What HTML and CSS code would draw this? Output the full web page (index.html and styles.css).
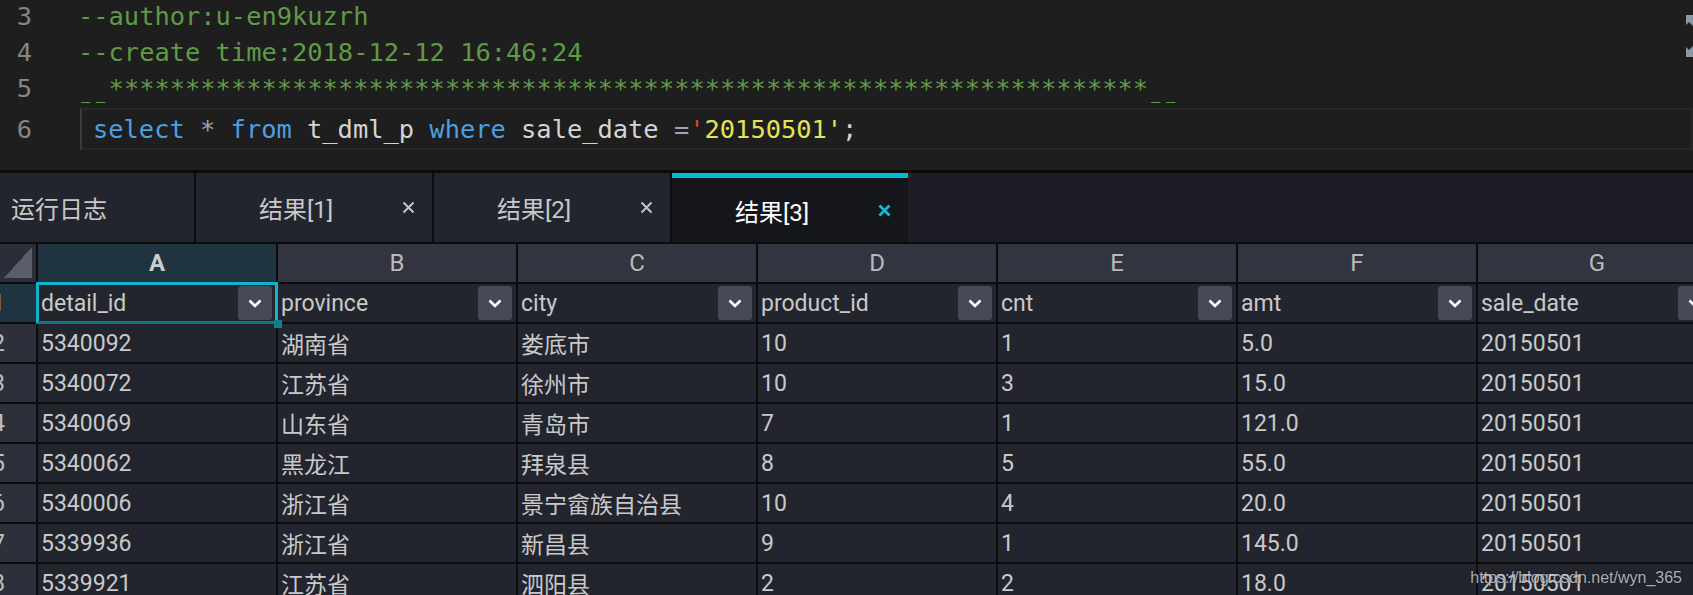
FILE: index.html
```html
<!DOCTYPE html>
<html lang="zh-CN">
<head>
  <meta charset="UTF-8">
  <title>结果[3]</title>
  <link rel="stylesheet" href="styles.css">
</head>
<body>
  <div class="editor">
    <div class="line"><span class="ln">3</span><span class="code cm">--author:u-en9kuzrh</span></div>
    <div class="line"><span class="ln">4</span><span class="code cm">--create time:2018-12-12 16:46:24</span></div>
    <div class="line"><span class="ln">5</span><span class="code cm"><span class="us">_</span><span class="us">_</span>********************************************************************<span class="us">_</span><span class="us">_</span></span></div>
    <div class="line current"><span class="ln">6</span><div class="code"><span class="kw">select</span> <span class="op">*</span> <span class="kw">from</span> t_dml_p <span class="kw">where</span> sale_date <span class="op">=</span><span class="q">'</span><span class="str">20150501'</span>;</div></div>
    <div class="editor-tools">
      <svg width="18" height="46" viewBox="0 0 18 46">
        <path d="M1 2h10l-3.5 3.5 7 7-3.5 3.5-7-7-3 3z" fill="#8b9aa7"/>
        <path d="M1 44h10l-3.5-3.5 7-7-3.5-3.5-7 7-3-3z" fill="#8b9aa7"/>
      </svg>
    </div>
  </div>

  <div class="tabs">
    <div class="tab first"><span class="tab-title">运行日志</span></div>
    <div class="tab"><span class="tab-title">结果[1]</span><svg class="close" width="13" height="13" viewBox="0 0 13 13"><path d="M1.5 1.5l10 10M11.5 1.5l-10 10"/></svg></div>
    <div class="tab"><span class="tab-title">结果[2]</span><svg class="close" width="13" height="13" viewBox="0 0 13 13"><path d="M1.5 1.5l10 10M11.5 1.5l-10 10"/></svg></div>
    <div class="tab active"><span class="tab-title">结果[3]</span><svg class="close" width="13" height="13" viewBox="0 0 13 13"><path d="M1.5 1.5l10 10M11.5 1.5l-10 10"/></svg></div>
  </div>

  <div class="sheet" id="sheet">
    <div class="c corner"><div class="tri"></div></div>
    <div class="c hd sel">A</div>
    <div class="c hd">B</div>
    <div class="c hd">C</div>
    <div class="c hd">D</div>
    <div class="c hd">E</div>
    <div class="c hd">F</div>
    <div class="c hd">G</div>
  </div>

  <div class="watermark">https://blog.csdn.net/wyn_365</div>

  <script>
    var fields = ["detail_id", "province", "city", "product_id", "cnt", "amt", "sale_date"];
    var rows = [
      ["5340092", "湖南省", "娄底市", "10", "1", "5.0", "20150501"],
      ["5340072", "江苏省", "徐州市", "10", "3", "15.0", "20150501"],
      ["5340069", "山东省", "青岛市", "7", "1", "121.0", "20150501"],
      ["5340062", "黑龙江", "拜泉县", "8", "5", "55.0", "20150501"],
      ["5340006", "浙江省", "景宁畲族自治县", "10", "4", "20.0", "20150501"],
      ["5339936", "浙江省", "新昌县", "9", "1", "145.0", "20150501"],
      ["5339921", "江苏省", "泗阳县", "2", "2", "18.0", "20150501"]
    ];
    var chevron = '<svg width="14" height="9" viewBox="0 0 14 9"><path d="M1.5 1.5l5.5 5.5 5.5-5.5" fill="none" stroke="#fff" stroke-width="2.6"/></svg>';
    var sheet = document.getElementById("sheet");

    function cell(cls, html) {
      var div = document.createElement("div");
      div.className = "c " + cls;
      div.innerHTML = html;
      sheet.appendChild(div);
    }

    cell("rh sel", "<span>1</span>");
    for (var i = 0; i < fields.length; i++) {
      cell("fld" + (i === 0 ? " active" : ""), "<span>" + fields[i] + "</span><span class=\"dd\">" + chevron + "</span>");
    }
    for (var r = 0; r < rows.length; r++) {
      cell("rh", "<span>" + (r + 2) + "</span>");
      for (var j = 0; j < rows[r].length; j++) {
        cell("", rows[r][j]);
      }
    }
  </script>
</body>
</html>
```

FILE: styles.css
```css
body {
  margin: 0;
  width: 1693px;
  height: 595px;
  overflow: hidden;
  background-color: #1e1e1e;
  position: relative;
}

/* editor */
.editor {
  height: 170px;
  background-color: #1e1e1e;
  border-bottom: 3px solid #0c0c0c;
  position: relative;
  overflow: hidden;
  font-family: "DejaVu Sans Mono", "Liberation Mono", monospace;
  font-size: 25.4px;
  color: #d4d4d4;
}

.line {
  display: flex;
  align-items: center;
  height: 36px;
}

.line:first-child {
  margin-top: -2px;
}

.ln {
  width: 32px;
  text-align: right;
  color: #858585;
}

.code {
  margin-left: 46px;
  white-space: pre;
}

.cm {
  color: #5f9a46;
}

.us {
  display: inline-block;
  transform: scaleX(0.6);
}

.line.current {
  height: 42px;
  margin-top: 2px;
}

.line.current .code {
  margin-left: 48px;
  flex: 1;
  height: 38px;
  line-height: 38px;
  padding-left: 11px;
  border: 2px solid #282828;
  border-left-color: #3c3c3c;
}

.kw {
  color: #4d9fe0;
}

.op {
  color: #a0a6ad;
}

.q {
  color: #d0463a;
}

.str {
  color: #e3e35a;
}

.editor-tools {
  position: absolute;
  right: -10px;
  top: 13px;
}

/* tabs */
.tabs {
  display: flex;
  height: 69px;
  background-color: #1c1d25;
  font-family: Roboto, "Noto Sans CJK SC", sans-serif;
  font-size: 24px;
}

.tab {
  width: 236px;
  flex-shrink: 0;
  display: flex;
  align-items: center;
  background-color: #23252e;
  border-right: 2px solid #0c0c0c;
  color: #c8c8c8;
}

.tab.first {
  width: 194px;
}

.tab.first .tab-title {
  padding-left: 11px;
}

.tab-title {
  flex: 1;
  padding-left: 63px;
}

.close {
  margin-right: 17px;
  stroke: #c4c4c4;
  stroke-width: 2;
}

.tab.active {
  background-color: #15161b;
  border-top: 5px solid #00bcd4;
  border-right: none;
  color: #ffffff;
}

.tab.active .close {
  stroke: #19b8d0;
  stroke-width: 2.8;
}

/* sheet */
.sheet {
  display: grid;
  grid-template-columns: 36px repeat(7, 238px);
  grid-auto-rows: 38px;
  gap: 2px;
  padding-top: 2px;
  background-color: #0c0c0c;
  font-family: Roboto, "Noto Sans CJK SC", sans-serif;
  font-size: 23px;
  color: #c9c9c9;
}

.c {
  display: flex;
  align-items: center;
  padding-left: 3px;
  background-color: #23252e;
  white-space: nowrap;
  overflow: hidden;
}

.hd {
  justify-content: center;
  padding-left: 0;
  background-color: #32343f;
  color: #b9b9b9;
  font-size: 24px;
}

.hd.sel {
  background-color: #1f3440;
  color: #cdcdcd;
  font-weight: bold;
}

.corner {
  padding: 0;
  background-color: #2b2d38;
}

.tri {
  width: 28px;
  height: 31px;
  margin: 3px 4px 4px 4px;
  background: linear-gradient(to bottom right, transparent 50%, #5b5d68 50%);
}

.rh {
  padding-left: 0;
  background-color: #2d2f3a;
  color: #c0c0c0;
}

.rh span {
  margin-left: -8px;
}

.rh.sel {
  background-color: #1f3440;
}

.fld {
  justify-content: space-between;
  padding-right: 4px;
}

.dd {
  width: 34px;
  height: 34px;
  flex-shrink: 0;
  display: flex;
  align-items: center;
  justify-content: center;
  background-color: #464958;
  border-radius: 3px;
}

.fld.active {
  position: relative;
  overflow: visible;
}

.fld.active::before {
  content: "";
  position: absolute;
  top: -2px;
  left: -2px;
  right: -2px;
  bottom: -2px;
  border: 3px solid #10b3c9;
  border-bottom-color: #0f7785;
}

.fld.active::after {
  content: "";
  position: absolute;
  right: -6px;
  bottom: -6px;
  width: 8px;
  height: 8px;
  background-color: #0f7f8f;
}

.watermark {
  position: absolute;
  right: 11px;
  bottom: 8px;
  font-family: "Liberation Sans", Arial, sans-serif;
  font-size: 16px;
  color: rgba(215, 215, 215, 0.8);
  text-shadow: 0 0 2px rgba(0, 0, 0, 0.6);
}
```
